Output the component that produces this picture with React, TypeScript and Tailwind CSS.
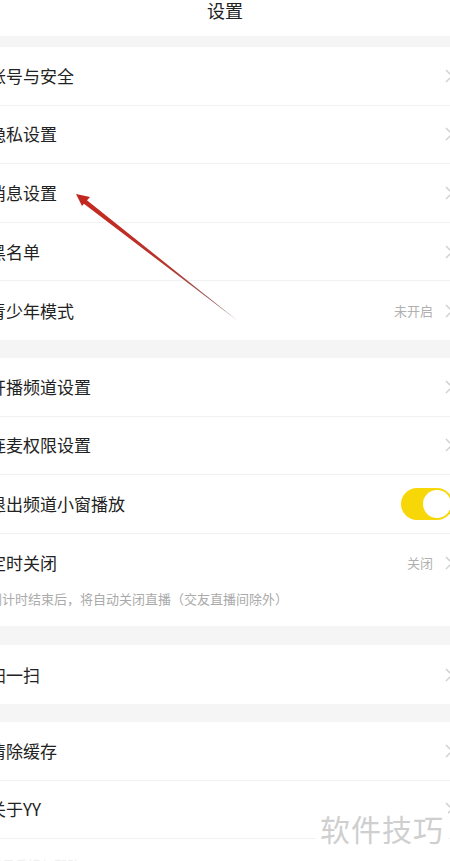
import React from "react";

type Row = { label: string; value?: string; toggle?: boolean; chevron?: boolean };

const font = { fontFamily: '"Noto Sans CJK SC", "Noto Sans", sans-serif' };

function Chevron() {
  return (
    <svg width="8" height="14" viewBox="0 0 8 14" className="shrink-0">
      <path d="M1 1 L7 7 L1 13" fill="none" stroke="#cfcfcf" strokeWidth="1.4" />
    </svg>
  );
}

function Toggle() {
  return (
    <div className="w-[52px] h-[32px] rounded-full bg-[#f7d708] flex items-center justify-end pr-[2px]">
      <div className="w-[28px] h-[28px] rounded-full bg-white" />
    </div>
  );
}

function SettingRow({ row, last }: { row: Row; last?: boolean }) {
  return (
    <div
      className={
        "h-[58.6px] flex items-center justify-between pr-[6px] bg-white " +
        (last ? "" : "border-b border-[#f1f1f1]")
      }
    >
      <span className="text-[17px] leading-[22px] text-[#222]">{row.label}</span>
      <div className="flex items-center gap-[12px]">
        {row.value && <span className="text-[13px] text-[#b0b0b0]">{row.value}</span>}
        {row.toggle ? <Toggle /> : <Chevron />}
      </div>
    </div>
  );
}

function Gap({ h }: { h: string }) {
  return <div className={"bg-[#f5f5f5] " + h} />;
}

export default function App() {
  const first: Row[] = [
    { label: "账号与安全" },
    { label: "隐私设置" },
    { label: "消息设置" },
    { label: "黑名单" },
    { label: "青少年模式", value: "未开启" },
  ];
  const second: Row[] = [
    { label: "开播频道设置" },
    { label: "连麦权限设置" },
    { label: "退出频道小窗播放", toggle: true },
  ];

  return (
    <div className="relative w-[450px] h-[861px] overflow-hidden bg-white" style={font}>
      <div className="-ml-[11px] w-[470px]">
        <div className="h-[36px] flex justify-center pl-[11px] pr-[9px]">
          <span className="text-[18px] leading-[20px] text-[#222]">设置</span>
        </div>
        <Gap h="h-[11px]" />

        {first.map((r, i) => (
          <SettingRow key={r.label} row={r} last={i === first.length - 1} />
        ))}
        <Gap h="h-[18px]" />

        {second.map((r) => (
          <SettingRow key={r.label} row={r} />
        ))}
        <SettingRow row={{ label: "定时关闭", value: "关闭" }} last />
        <div className="h-[36px] bg-white">
          <span className="text-[13px] leading-[18px] text-[#aaa] block -mt-[2px]">
            倒计时结束后，将自动关闭直播（交友直播间除外）
          </span>
        </div>
        <Gap h="h-[19px]" />

        <SettingRow row={{ label: "扫一扫" }} last />
        <Gap h="h-[18px]" />

        <SettingRow row={{ label: "清除缓存" }} />
        <SettingRow row={{ label: "关于YY" }} />
        <div className="h-[40px] bg-white pt-[12px]">
          <span className="text-[13px] text-[#eee]">意见反馈与帮助</span>
        </div>
      </div>

      <div className="absolute left-[316px] top-[810px] bg-white px-[4px] text-[30px] leading-[36px] text-[#cfcfcf] tracking-[1px]">
        软件技巧
      </div>

      <svg className="absolute left-0 top-0 pointer-events-none" width="450" height="861">
        <defs>
          <linearGradient id="ar" x1="238" y1="321" x2="76" y2="194" gradientUnits="userSpaceOnUse">
            <stop offset="0" stopColor="#8a6a66" />
            <stop offset="0.5" stopColor="#b8322a" />
            <stop offset="1" stopColor="#c6281f" />
          </linearGradient>
        </defs>
        <polygon points="238,321 86,199.5 83.5,203.5" fill="url(#ar)" />
        <polygon points="76,194 90,197 82,206" fill="#c0281f" />
      </svg>
    </div>
  );
}
